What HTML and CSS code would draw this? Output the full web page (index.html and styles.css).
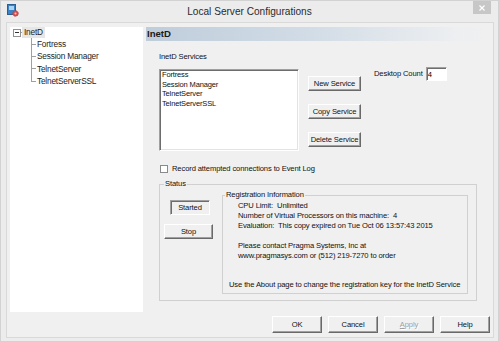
FILE: index.html
```html
<!DOCTYPE html>
<html lang="en">
<head>
    <meta charset="UTF-8">
    <meta name="viewport" content="width=device-width, initial-scale=1.0">
    <title>Local Server Configurations</title>
    <link rel="stylesheet" href="styles.css">
</head>
<body>
    <div class="window">
        <div class="titlebar">
            <div class="titlebar-side">
                <svg class="app-icon" width="12" height="13" viewBox="0 0 12 13">
                    <rect x="0.5" y="0.5" width="8" height="10" fill="#3b82c6" stroke="#2b5f94"/>
                    <rect x="2" y="2" width="5" height="4" fill="#a6d4f2"/>
                    <circle cx="8.5" cy="9.5" r="2.8" fill="#d4504c" stroke="#b83a36" stroke-width="0.9" stroke-dasharray="1 0.7"/>
                    <circle cx="8.5" cy="9.5" r="1" fill="#f4c8c6"/>
                </svg>
            </div>
            <div class="title">Local Server Configurations</div>
            <div class="titlebar-side titlebar-right">
                <div class="close-btn">
                    <svg width="6" height="6" viewBox="0 0 6 6">
                        <path d="M0.5 0.5 L5.5 5.5 M5.5 0.5 L0.5 5.5" stroke="#fff" stroke-width="1.2"/>
                    </svg>
                </div>
            </div>
        </div>

        <div class="client">
            <div class="main">
                <div class="tree">
                    <div class="tree-root">
                        <span class="expander"></span>
                        <span class="root-link"></span>
                        <span class="root-label">InetD</span>
                    </div>
                    <div class="children">
                        <div class="node"><span class="branch"></span>Fortress</div>
                        <div class="node"><span class="branch"></span>Session Manager</div>
                        <div class="node"><span class="branch"></span>TelnetServer</div>
                        <div class="node"><span class="branch"></span>TelnetServerSSL</div>
                    </div>
                </div>

                <div class="pane">
                    <div class="pane-header">InetD</div>
                    <div class="pane-body">
                        <div class="section-label">InetD Services</div>
                        <div class="services">
                            <ul class="listbox">
                                <li>Fortress</li>
                                <li>Session Manager</li>
                                <li>TelnetServer</li>
                                <li>TelnetServerSSL</li>
                            </ul>
                            <div class="service-buttons">
                                <button type="button" class="btn">New Service</button>
                                <button type="button" class="btn">Copy Service</button>
                                <button type="button" class="btn">Delete Service</button>
                            </div>
                            <div class="desktop-count">
                                <label for="desktop-count">Desktop Count</label>
                                <input type="text" id="desktop-count" value="4">
                            </div>
                        </div>

                        <label class="check-row">
                            <input type="checkbox" class="checkbox">
                            Record attempted connections to Event Log
                        </label>

                        <fieldset class="group status">
                            <legend>Status</legend>
                            <div class="status-row">
                                <div class="status-col">
                                    <div class="state-box">Started</div>
                                    <button type="button" class="btn stop-btn">Stop</button>
                                </div>
                                <fieldset class="group registration">
                                    <legend>Registration Information</legend>
                                    <div class="reg-info">
                                        <div>CPU Limit:&nbsp; Unlimited</div>
                                        <div>Number of Virtual Processors on this machine:&nbsp; 4</div>
                                        <div>Evaluation:&nbsp; This copy expired on Tue Oct 06 13:57:43 2015</div>
                                        <div>&nbsp;</div>
                                        <div>Please contact Pragma Systems, Inc at</div>
                                        <div>www.pragmasys.com or (512) 219-7270 to order</div>
                                    </div>
                                    <div class="reg-note">Use the About page to change the registration key for the InetD Service</div>
                                </fieldset>
                            </div>
                        </fieldset>
                    </div>
                </div>
            </div>

            <div class="dialog-buttons">
                <button type="button" class="btn dlg-btn">OK</button>
                <button type="button" class="btn dlg-btn">Cancel</button>
                <button type="button" class="btn dlg-btn" disabled><u>A</u>pply</button>
                <button type="button" class="btn dlg-btn">Help</button>
            </div>
        </div>
    </div>
</body>
</html>
```

FILE: styles.css
```css
* {
    box-sizing: border-box;
}

html,
body {
    margin: 0;
}

body {
    font-family: "Liberation Sans", Arial, sans-serif;
    font-size: 7.6px;
    letter-spacing: -0.12px;
    line-height: 10px;
    color: #111;
    background: #ebebeb;
}

.window {
    width: 499px;
    height: 342px;
    border: 1px solid #d2d2d2;
    background: #ececec;
    display: flex;
    flex-direction: column;
}

/* title bar */
.titlebar {
    height: 21px;
    display: flex;
}

.titlebar-side {
    width: 30px;
    padding-left: 6px;
}

.titlebar-right {
    display: flex;
    justify-content: flex-end;
    padding: 0 7px 0 0;
}

.app-icon {
    display: block;
    margin-top: 3px;
}

.title {
    flex: 1;
    text-align: center;
    font-size: 10.1px;
    letter-spacing: 0;
    line-height: 21px;
    color: #2b2b2b;
}

.close-btn {
    width: 18px;
    height: 13px;
    background: #c7c7c7;
    display: flex;
    align-items: center;
    justify-content: center;
}

/* client area */
.client {
    flex: 1;
    margin: 0 4px 3px 5px;
    border: 1px solid #d9d9d9;
    background: #f0f0f0;
    padding: 4px 1px 4px 3px;
    display: flex;
    flex-direction: column;
}

.main {
    height: 285px;
    display: flex;
    gap: 3px;
}

/* tree */
.tree {
    width: 133px;
    background: #fff;
    padding-left: 3px;
    font-size: 8.3px;
    letter-spacing: -0.2px;
    color: #1c1c1c;
}

.tree-root {
    height: 11px;
    display: flex;
    align-items: center;
}

.expander {
    width: 8px;
    height: 8px;
    border: 1px solid #919191;
    background: linear-gradient(#333, #333) center / 4px 1px no-repeat, #fff;
}

.root-link {
    width: 1px;
    height: 1px;
    background: #a0a0a0;
}

.root-label {
    padding: 0 2px;
    line-height: 11px;
    background: #e6e6e6;
}

.children {
    margin-left: 18px;
    background: linear-gradient(#a0a0a0, #a0a0a0) 0 0 / 1px calc(100% - 6px) no-repeat;
}

.node {
    height: 12.3px;
    display: flex;
    align-items: center;
}

.branch {
    width: 5px;
    height: 1px;
    margin-right: 1px;
    background: #a0a0a0;
}

/* right pane */
.pane {
    width: 346px;
    display: flex;
    flex-direction: column;
}

.pane-header {
    height: 14px;
    padding-left: 1px;
    font-size: 9.6px;
    font-weight: bold;
    letter-spacing: 0;
    line-height: 14px;
    color: #1a1a1a;
    background: linear-gradient(to right, #bfcddb, #d0dbe5 45%, #edeff1 90%, #f0f0f0);
}

.pane-body {
    padding: 11px 0 0 13px;
}

.services {
    display: flex;
    align-items: flex-start;
    margin-top: 5px;
}

.listbox {
    width: 140px;
    height: 82px;
    margin: 2px 0 0;
    padding: 0 2px;
    list-style: none;
    background: #fff;
    font-size: 7.5px;
    letter-spacing: -0.15px;
    line-height: 9.5px;
    border: 1px solid;
    border-color: #a0a0a0 #fff #fff #a0a0a0;
    box-shadow: inset 1px 1px 0 #6d6d6d, inset -1px -1px 0 #e3e3e3;
}

.service-buttons {
    display: flex;
    flex-direction: column;
    gap: 13px;
    margin: 9px 0 0 9px;
}

.btn {
    width: 53px;
    height: 15px;
    padding: 0;
    font: inherit;
    letter-spacing: inherit;
    color: #111;
    background: #f0f0f0;
    border: 1px solid;
    border-color: #fff #696969 #696969 #fff;
    box-shadow: inset -1px -1px 0 #a0a0a0;
}

.btn:disabled {
    color: #a0a0a0;
    text-shadow: 1px 1px 0 #fff;
}

.desktop-count {
    display: flex;
    align-items: center;
    gap: 3px;
    margin-left: 13px;
}

.desktop-count input {
    width: 21px;
    height: 14px;
    padding: 0 1px;
    font: inherit;
    background: #fff;
    border: 1px solid;
    border-color: #a0a0a0 #fff #fff #a0a0a0;
    box-shadow: inset 1px 1px 0 #6d6d6d;
}

.check-row {
    display: flex;
    align-items: center;
    gap: 4px;
    height: 10px;
    margin-top: 13px;
    padding-left: 1px;
}

.checkbox {
    appearance: none;
    width: 8px;
    height: 8px;
    margin: 0;
    border: 1px solid #8a8a8a;
    background: #fff;
}

/* group boxes */
.group {
    margin: 0;
    border: 1px solid #d0d0d0;
    min-width: 0;
}

.group legend {
    padding: 0 1px;
    line-height: 10px;
}

.status {
    width: 318px;
    margin-top: 5px;
    padding: 1px 0 6px 4px;
}

.status-row {
    display: flex;
    align-items: flex-start;
}

.status-col {
    width: 49px;
    padding-top: 10px;
}

.state-box {
    width: 40px;
    height: 15px;
    margin-left: 6px;
    line-height: 13px;
    text-align: center;
    border: 1px solid;
    border-color: #a0a0a0 #fff #fff #a0a0a0;
    box-shadow: inset 1px 1px 0 #6d6d6d;
}

.stop-btn {
    width: 49px;
    margin-top: 9px;
}

.registration {
    width: 246px;
    height: 104px;
    margin-left: 9px;
    padding: 1px 0 0 2px;
}

.reg-info {
    margin-left: 13px;
}

.reg-note {
    margin: 19px 0 0 4px;
}

/* dialog buttons */
.dialog-buttons {
    display: flex;
    justify-content: flex-end;
    gap: 6px;
    margin-top: 4px;
    padding-right: 2px;
}

.dlg-btn {
    width: 50px;
    height: 17px;
}
```
